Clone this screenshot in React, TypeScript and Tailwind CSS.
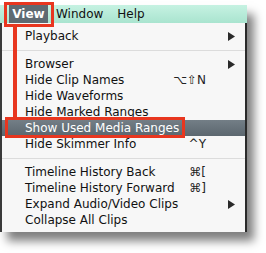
const font = { fontFamily: '"DejaVu Sans", "Liberation Sans", sans-serif' };

type Item = { label: string; shortcut?: string; arrow?: boolean; active?: boolean };

const groups: Item[][] = [
  [{ label: 'Playback', arrow: true }],
  [
    { label: 'Browser', arrow: true },
    { label: 'Hide Clip Names', shortcut: '⌥⇧N' },
    { label: 'Hide Waveforms' },
    { label: 'Hide Marked Ranges' },
    { label: 'Show Used Media Ranges', active: true },
    { label: 'Hide Skimmer Info', shortcut: '^Y' },
  ],
  [
    { label: 'Timeline History Back', shortcut: '⌘[' },
    { label: 'Timeline History Forward', shortcut: '⌘]' },
    { label: 'Expand Audio/Video Clips', arrow: true },
    { label: 'Collapse All Clips' },
  ],
];

function Arrow() {
  return (
    <svg width="7" height="9" viewBox="0 0 7 9" className="block">
      <path d="M0 0 L7 4.5 L0 9 Z" fill="#2a2a2a" />
    </svg>
  );
}

function Row({ item }: { item: Item }) {
  return (
    <div
      className={`flex h-[16px] items-center pl-[23px] text-[12px] leading-none ${
        item.active ? 'bg-gradient-to-b from-[#737e86] to-[#5c676f] text-white' : 'text-[#111]'
      }`}
    >
      <span className="flex-1 whitespace-nowrap">{item.label}</span>
      <span className="whitespace-nowrap text-[12px] text-[#222]">{item.shortcut}</span>
      <span className="flex w-[39px] justify-start pl-[22px]">{item.arrow && <Arrow />}</span>
    </div>
  );
}

export default function App() {
  return (
    <div className="relative h-[253px] w-[266px] overflow-hidden bg-white" style={font}>
      <div className="mt-[5px] flex w-[247px] flex-col shadow-[7px_9px_9px_rgba(0,0,0,0.5)]">
        {/* menu bar */}
        <div className="flex h-[18px] items-center bg-gradient-to-b from-[#c6f2e2] to-[#a9e4cf] text-[12px] text-[#111]">
          <span className="ml-[9px] flex h-full w-[39px] items-center justify-center bg-[#5e6a72] font-bold text-white">
            View
          </span>
          <span className="ml-[8px]">Window</span>
          <span className="ml-[14px]">Help</span>
        </div>
        {/* dropdown */}
        <div className="flex flex-col border-l-[2px] border-r-[2px] border-l-[#3a3a3a] border-r-[#2a2a2a] bg-[#f7f7f7] pb-[4px] pt-[5px]">
          {groups.map((g, gi) => (
            <div key={gi}>
              {gi > 0 && (
                <div className="flex h-[12px] items-center">
                  <div className="h-px w-full bg-[#dcdcdc]" />
                </div>
              )}
              {g.map((it) => (
                <Row key={it.label} item={it} />
              ))}
            </div>
          ))}
        </div>
      </div>

      {/* annotation overlays */}
      <div className="absolute left-[4px] top-[2px] h-[25px] w-[50px] border-[3px] border-[#e8361f]" />
      <div className="absolute left-[13px] top-[27px] h-[91px] w-[4px] bg-[#e8361f]" />
      <div className="absolute left-[5px] top-[117px] h-[21px] w-[180px] border-[3px] border-[#e8361f]" />
    </div>
  );
}
